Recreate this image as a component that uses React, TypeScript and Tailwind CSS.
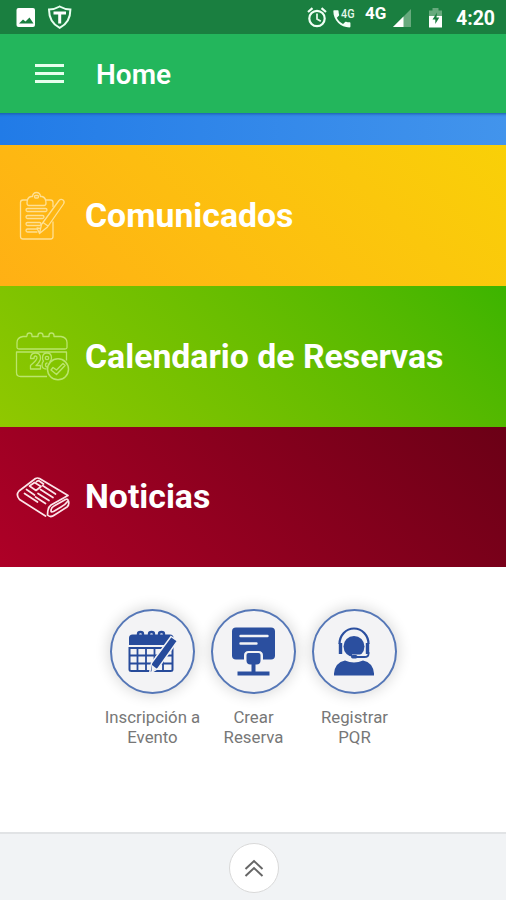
import React from 'react';

const StatusBar: React.FC = () => (
  <div className="flex h-[34px] items-center bg-[#1a7f40] text-white">
    <svg className="ml-4 h-[34px] w-[58px]" viewBox="16 0 58 34" fill="none">
      <rect x="16.5" y="8" width="18.5" height="19" rx="2" fill="#fff" />
      <path d="M19 23.5l4-4 2.500 2 4-4 4 6z" fill="#1a7f40" />
      <path d="M59.700 6.500c-3.400 2-7 2.900-10.700 3 0 8.500 3.500 14.800 10.700 18.300 7.200-3.500 10.700-9.800 10.700-18.300-3.700-.1-7.300-1-10.700-3z" stroke="#e8fff0" strokeWidth="2" />
      <path d="M53.500 13h12.500M59.700 13v10.500" stroke="#fff" strokeWidth="3" />
    </svg>
    <svg className="ml-auto h-[34px] w-[56px]" viewBox="304 0 56 34" fill="none">
      <circle cx="317" cy="18.500" r="7.700" stroke="#f0fff4" strokeWidth="2.200" />
      <path d="M317 13.500v5.500l3.800 2.300" stroke="#e0f5e6" strokeWidth="1.800" />
      <path d="M308 12l4.500-3.800M326 12l-4.500-3.800" stroke="#f0fff4" strokeWidth="2.200" />
      <path
        transform="translate(330.500 7.500) scale(.95)"
        d="M20 15.500c-1.250 0-2.450-.2-3.570-.57-.35-.11-.74-.03-1.020.24l-2.200 2.200c-2.830-1.440-5.150-3.750-6.590-6.590l2.200-2.210c.28-.26.36-.65.25-1C8.700 6.450 8.500 5.250 8.500 4c0-.55-.45-1-1-1H4c-.55 0-1 .45-1 1 0 9.390 7.610 17 17 17 .55 0 1-.45 1-1v-3.500c0-.55-.45-1-1-1z"
        fill="#f4fff7"
      />
      <text x="341" y="17.500" fill="#e4f8ea" fontFamily="Roboto, sans-serif" fontSize="13" fontWeight="500" textLength="13.5" lengthAdjust="spacingAndGlyphs">4G</text>
    </svg>
    <span className="mb-[7px] ml-[5px] w-[22px] text-[17px] leading-none font-bold">4G</span>
    <svg className="ml-[4px] h-[34px] w-[62px]" viewBox="391 0 62 34" fill="none">
      <path d="M411 9v18h-18z" fill="#67aa7d" />
      <path d="M403.500 16.500v10.500h-10.500z" fill="#fff" />
      <path d="M432.500 8h6v2.500h3.500v6.500h-13v-6.500h3.500z" fill="#67aa7d" />
      <path d="M429 16h13v11.500h-13z" fill="#fff" />
      <path d="M437 12.500l-4.500 7h2.800v4.500l4-6.500h-2.800z" fill="#1a7f40" />
    </svg>
    <span className="mr-[10px] ml-[3px] w-[40px] pt-[3px] text-[19.500px] leading-none font-bold whitespace-nowrap">4:20</span>
  </div>
);

const ClipboardIcon = () => (
  <svg className="h-[60px] w-[60px]" viewBox="12 186 60 60" fill="none" stroke="#ffe093" strokeWidth="1.300" strokeLinecap="round" strokeLinejoin="round">
    <path d="M27.500 200h-4.500q-2.500 0-2.500 2.500v34q0 2.500 2.500 2.500h27.500q2.500 0 2.500-2.500v-14.500M46 200h4.500q2.500 0 2.500 2.500v4" />
    <path d="M31 196.500h1.500q.5-4 4-4t4 4h1.500q4 1 4 6.500 0 2.500-2 2.500h-15q-2 0-2-2.500 0-5.500 4-6.500z" />
    <rect x="34.500" y="195.500" width="4" height="2.500" rx="1" />
    <rect x="26" y="208.500" width="21" height="3" rx="1.500" />
    <rect x="26" y="215.500" width="18" height="3" rx="1.500" />
    <rect x="26" y="222.500" width="15" height="3" rx="1.500" />
    <path d="M37 229h-9.500q-1.500 0-1.500 1.500t1.500 1.500h9.500" />
    <path d="M41.500 224.500l17.500-24q2-2 4-.5t.5 4l-16 23-8 6.500zM43 222.500l5 3.500M39.500 233.500l-2.500-5.500 3.500.5" />
  </svg>
);

const CalendarIcon = () => (
  <svg className="h-[60px] w-[60px]" viewBox="12 327 60 60" fill="none" stroke="#bbe56c" strokeWidth="1.300" strokeLinejoin="round">
    <path d="M27 336.500h-4q-6 1-6 6v5q0 1.500 2 1.500h46q2 0 2-1.500v-5q0-5-6-6h-3" />
    <path d="M27 336.500v-1q0-2.500 2.500-2.500t2.500 2.500v1h6v-1q0-2.500 2.500-2.500t2.500 2.500v1h6v-1q0-2.500 2.500-2.500t2.500 2.500v1h4" />
    <path d="M47 376.500h-26.500q-4 0-4-4v-20.500h50v8.500" />
    <path d="M30.500 358.500q0-5.500 5-5.500t5 5q0 3.500-4.500 7.500h4.500v3.500h-10v-3.500q6.500-5.500 6.500-7.500 0-2-1.500-2t-1.500 2.500z" />
    <path d="M51 362q-1 0-1-.5 1.500-1.500 1.500-3.500 0-5-4.500-5t-4.500 5q0 2 1 3-1.500 1.500-1.500 4 0 4 4.500 4" />
    <circle cx="47" cy="358" r="1.700" />
    <path d="M47.500 363q-2 0-2 2t1.500 2" />
    <circle cx="58" cy="369.300" r="10.500" strokeWidth="1.500" />
    <path d="M51 370l2-2.500 3.500 2.500 6.500-6.500 2 2-8.500 9z" strokeWidth="1.400" />
  </svg>
);

const NewspaperIcon = () => (
  <svg className="h-[60px] w-[60px]" viewBox="12 467 60 60" fill="none" stroke="#fce5e9" strokeWidth="1.700" strokeLinecap="round" strokeLinejoin="round">
    <path d="M45.500 516l-26-16.500q-4-4.500-.5-8.500l16.500-12.500q2-1 4 0l28.500 17-17 9.500q-3.500 2.500-3.500 10 3 3 7 0l12.500-8q2.500-2 1.500-6" />
    <path d="M51 511q0-3.500 3-5l11.500-6.500q3-1 2.500 1.500-3 4-7 6l-7.500 4.500q-2.500 1-2.500-.5z" />
    <path d="M29.500 486l5-3.500 6.500 4-5 4zM36.500 481.500l2-1 5 3.500" />
    <path d="M26.500 489.500l8 5.500M24.500 493.500l13 8.500M42.500 485.500l13 8.500M40.500 489.500l12.500 8M38 493.500l11 7M35.500 497l10 6.500" />
  </svg>
);

const EventIcon = () => (
  <svg className="h-[60px] w-[60px]" viewBox="122 622 60 60" fill="none">
    <path d="M129 645v-7q0-3.500 3.500-3.500h37.500q3.500 0 3.500 3.500v7z" fill="#274b9b" />
    <path d="M138 635.500v-1.500q0-2 2.500-2t2.500 2v1.500M149 635.500v-1.500q0-2 2.500-2t2.500 2v1.500M159 635.500v-1.500q0-2 2.500-2t2.500 2v1.500" stroke="#274b9b" strokeWidth="2.400" />
    <path d="M129.500 648h43v21.500q0 1.500-2 1.500h-39q-2 0-2-1.500z" stroke="#274b9b" strokeWidth="2" />
    <path d="M129 655.500h44M129 663.500h44M137.500 648v23M146 648v23M154.500 648v23M163 648v23" stroke="#274b9b" strokeWidth="1.800" />
    <path d="M171 636.500l6.500 4.500-19.500 27.500-8.500 5 2-10.500z" fill="#274b9b" stroke="#f3f3f5" strokeWidth="1.500" />
    <path d="M152 665l4.500 3.500-5 3.500z" fill="#f3f3f5" />
  </svg>
);

const DeskIcon = () => (
  <svg className="h-[60px] w-[60px]" viewBox="223 622 60 60" fill="none">
    <rect x="232" y="627.500" width="43" height="32" rx="4" fill="#2b4f9f" />
    <path d="M240.500 636h27M240.500 643.500h16" stroke="#f3f3f5" strokeWidth="2.400" strokeLinecap="round" />
    <path d="M244 661v-5.500q0-4.500 4.500-4.500h10q4.500 0 4.500 4.500v5.500z" fill="#f3f3f5" />
    <path d="M246.500 655q0-2 2-2h10q2 0 2 2v5.500q0 4-4 4h-6q-4 0-4-4z" fill="#2b4f9f" />
    <path d="M253.500 663v10M237.500 673.500h32" stroke="#2b4f9f" strokeWidth="4" />
  </svg>
);

const SupportIcon = () => (
  <svg className="h-[60px] w-[60px]" viewBox="325 622 60 60" fill="none">
    <path d="M340.500 644a14.500 15.500 0 0 1 29 0" stroke="#2b4f9f" strokeWidth="2.200" />
    <path d="M341.500 643v11M368.500 643v11" stroke="#2b4f9f" strokeWidth="3.400" />
    <ellipse cx="355" cy="646.500" rx="10.500" ry="10.500" fill="#2b4f9f" />
    <path d="M365 657h-12" stroke="#f3f3f5" strokeWidth="5" />
    <path d="M369.500 652v2q0 3-4 3h-8" stroke="#2b4f9f" strokeWidth="1.800" />
    <rect x="352" y="655" width="6.500" height="3.500" rx="1.700" fill="#2b4f9f" />
    <path d="M335 675.500v-2q1-11 11-13 9 4 18 0 10 2 11 13v2z" fill="#2b4f9f" />
  </svg>
);

const sections = [
  { title: 'Comunicados', icon: <ClipboardIcon />, style: 'h-[141px] from-[#ffb014] to-[#f9d007]' },
  { title: 'Calendario de Reservas', icon: <CalendarIcon />, style: 'h-[141px] from-[#90c800] to-[#3cb400]' },
  { title: 'Noticias', icon: <NewspaperIcon />, style: 'h-[140px] from-[#ae0027] to-[#6b0016]' },
];

const actions = [
  { lines: ['Inscripción a', 'Evento'], icon: <EventIcon /> },
  { lines: ['Crear', 'Reserva'], icon: <DeskIcon /> },
  { lines: ['Registrar', 'PQR'], icon: <SupportIcon /> },
];

const App: React.FC = () => {
  return (
    <div className="flex h-[900px] w-[506px] flex-col overflow-hidden bg-white font-['Roboto',sans-serif]">
      <StatusBar />
      <header className="flex h-[79px] items-center bg-[#23b65c] text-white">
        <button className="ml-[35px] flex w-[29px] flex-col gap-[5px]" aria-label="Menu">
          <span className="h-[3px] bg-[#e6ffee]" />
          <span className="h-[3px] bg-[#e6ffee]" />
          <span className="h-[3px] bg-[#e6ffee]" />
        </button>
        <h1 className="ml-8 pt-[3px] text-[28px] leading-none font-semibold">Home</h1>
      </header>
      <div className="h-8 bg-linear-to-r from-[#217be7] to-[#4294ec] shadow-[inset_0_4px_3px_-3px_#1c5aa5]" />

      {sections.map((section) => (
        <div key={section.title} className={`flex items-center bg-linear-45 pl-3 ${section.style}`}>
          {section.icon}
          <h2 className="ml-[13px] text-[33.800px] leading-none font-bold whitespace-nowrap text-white">{section.title}</h2>
        </div>
      ))}

      <div className="flex flex-1 justify-center pt-[42px]">
        {actions.map((action) => (
          <div key={action.lines[0]} className="flex w-[101px] flex-col items-center">
            <div className="flex h-[85px] w-[85px] items-center justify-center rounded-full border-2 border-[#5577b7] bg-[#f3f3f5] shadow-[0_0_14px_2px_rgba(0,0,0,0.14)]">
              {action.icon}
            </div>
            <p className="mt-[13px] ml-px text-center text-[16.800px] leading-[20px] whitespace-nowrap text-[#777]">
              {action.lines[0]}
              <br />
              {action.lines[1]}
            </p>
          </div>
        ))}
      </div>

      <footer className="flex h-[68px] items-center justify-center border-t-2 border-[#e1e3e5] bg-[#f1f3f5] pt-px pl-px">
        <button className="flex h-[50px] w-[50px] items-center justify-center rounded-full border border-[#d9d9d9] bg-white" aria-label="Expand">
          <svg className="h-5 w-5" viewBox="0 0 20 20" fill="none" stroke="#666" strokeWidth="2">
            <path d="M1.500 11L10 3l8.500 8M1.500 18L10 10l8.500 8" />
          </svg>
        </button>
      </footer>
    </div>
  );
};

export default App;
